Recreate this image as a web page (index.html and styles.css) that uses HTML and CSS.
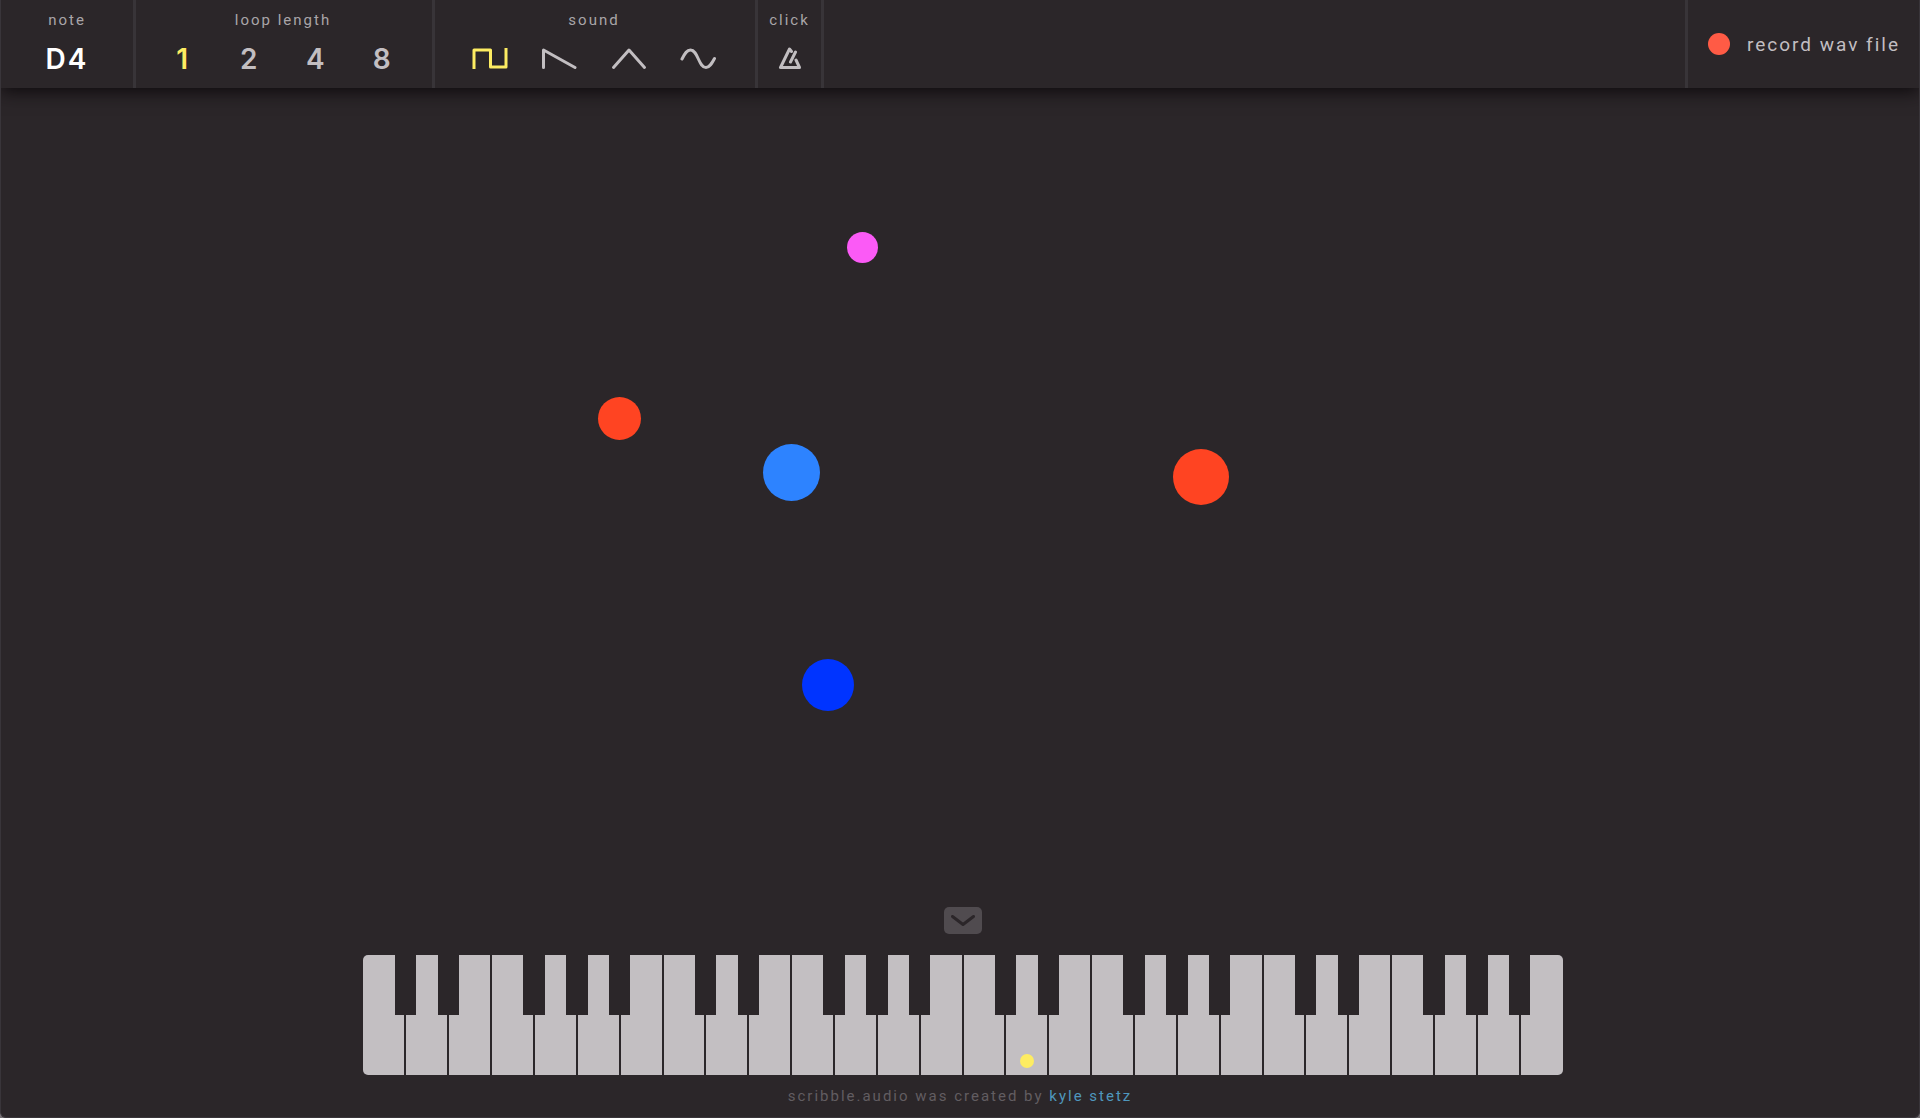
FILE: index.html
```html
<!DOCTYPE html>
<html lang="en">
<head>
  <meta charset="UTF-8">
  <meta name="viewport" content="width=device-width, initial-scale=1.0">
  <title>scribble.audio</title>
  <link rel="stylesheet" href="styles.css">
</head>
<body>
  <!-- Toolbar -->
  <header class="toolbar">
    <div class="panel panel-note">
      <span class="label">note</span>
      <output class="note-value" id="noteValue">D4</output>
    </div>

    <div class="panel panel-loop" role="group" aria-labelledby="loopLabel">
      <span class="label" id="loopLabel">loop length</span>
      <div class="options">
        <button class="option active">1</button>
        <button class="option">2</button>
        <button class="option">4</button>
        <button class="option">8</button>
      </div>
    </div>

    <div class="panel panel-sound" role="group" aria-labelledby="soundLabel">
      <span class="label" id="soundLabel">sound</span>
      <div class="options">
        <button class="option active" aria-label="square">
          <svg class="wave" viewBox="0 0 36 24"><path d="M2 22V3H18.500V20H34V1" stroke-linecap="butt"/></svg>
        </button>
        <button class="option" aria-label="sawtooth">
          <svg class="wave" viewBox="0 0 36 24"><path d="M2.500 20.500V3L34 20.500"/></svg>
        </button>
        <button class="option" aria-label="triangle">
          <svg class="wave" viewBox="0 0 36 24"><path d="M2.500 20.500L18 3L33.500 20.500"/></svg>
        </button>
        <button class="option" aria-label="sine">
          <svg class="wave" viewBox="0 0 36 24"><path d="M2 12C5 6 7 3 10.500 3C18 3 18.500 20.500 26 20.500C29.500 20.500 31.500 17 34.500 11.500"/></svg>
        </button>
      </div>
    </div>

    <div class="panel panel-click">
      <span class="label" id="clickLabel">click</span>
      <button class="option" aria-labelledby="clickLabel">
        <svg class="metronome" viewBox="0 0 24 24"><path d="M13.500 4.500L11.500 2L2.500 20.500H21.500L18 13M17.500 5L12.500 15"/></svg>
      </button>
    </div>

    <button class="record">
      <span class="record-dot"></span>
      record wav file
    </button>
  </header>

  <!-- Drawing area -->
  <main class="canvas">
    <span class="dot dot-pink"></span>
    <span class="dot dot-red"></span>
    <span class="dot dot-sky"></span>
    <span class="dot dot-orange"></span>
    <span class="dot dot-blue"></span>
  </main>

  <!-- Keyboard -->
  <section class="keyboard-area">
    <button class="toggle" aria-label="hide keyboard">
      <svg class="chevron" viewBox="0 0 24 12"><path d="M1.500 1.500L12 9.500L22.500 1.500"/></svg>
    </button>
    <div class="keyboard" id="keyboard"></div>
  </section>

  <footer class="credits">
    scribble.audio was created by <a href="#">kyle stetz</a>
  </footer>

  <script src="script.js"></script>
</body>
</html>
```
FILE: styles.css
```css
* {
  box-sizing: border-box;
}

html {
  background: #777276;
}

body {
  margin: 0;
  min-height: 100vh;
  display: flex;
  flex-direction: column;
  font-family: Roboto, "Liberation Sans", sans-serif;
  font-size: 15px;
  letter-spacing: 2px;
  color: #c2bec1;
  background: #2b2629;
  border: 1px solid #39353a;
  border-top: none;
  border-radius: 0 0 6px 6px;
}

html, body {
  overflow: hidden;
}

button {
  margin: 0;
  padding: 0;
  border: none;
  background: none;
  color: inherit;
  font: inherit;
  letter-spacing: inherit;
  cursor: pointer;
}

svg {
  display: block;
  fill: none;
  stroke: currentColor;
  stroke-width: 3;
  stroke-linecap: round;
  stroke-linejoin: round;
}

/* Toolbar */
.toolbar {
  display: flex;
  height: 88px;
  background: #2b2629;
  box-shadow: 0 4px 16px #0f0b0e;
  z-index: 1;
}

.panel {
  display: flex;
  flex-direction: column;
  align-items: center;
  gap: 9px;
  padding-top: 10px;
  border-right: 3px solid #383438;
}

.panel-note {
  width: 135px;
}

.panel-loop {
  width: 299px;
  padding-left: 14px;
  padding-right: 16px;
}

.panel-sound {
  width: 323px;
  padding-left: 20px;
  padding-right: 22px;
}

.panel-click {
  width: 66px;
}

.label {
  line-height: 20px;
  color: #a9a5a8;
}

.options {
  display: flex;
  align-self: stretch;
}

.note-value,
.option {
  font-family: Inter, sans-serif;
  font-size: 28px;
  font-weight: 600;
  line-height: 40px;
}

.note-value {
  color: #fff;
}

.option {
  display: flex;
  flex: 1;
  align-items: center;
  justify-content: center;
  height: 40px;
}

.panel-click .option {
  flex: none;
}

.option.active {
  color: #fdec62;
}

.wave {
  width: 36px;
  height: 24px;
}

.metronome {
  width: 24px;
  height: 24px;
}

.record {
  display: flex;
  align-items: center;
  gap: 17px;
  margin-left: auto;
  padding: 0 19px 0 20px;
  border-left: 3px solid #383438;
  font-size: 19px;
}

.record-dot {
  width: 22px;
  height: 22px;
  border-radius: 50%;
  background: #ff5b45;
}

/* Drawing area */
.canvas {
  position: relative;
  flex: 1;
}

.dot {
  position: absolute;
  border-radius: 50%;
}

.dot-pink {
  left: 846px;
  top: 144px;
  width: 31px;
  height: 31px;
  background: #fb5af6;
}

.dot-red {
  left: 597px;
  top: 309px;
  width: 43px;
  height: 43px;
  background: #ff4422;
}

.dot-sky {
  left: 762px;
  top: 356px;
  width: 57px;
  height: 57px;
  background: #2d83ff;
}

.dot-orange {
  left: 1172px;
  top: 361px;
  width: 56px;
  height: 56px;
  background: #ff4422;
}

.dot-blue {
  left: 801px;
  top: 571px;
  width: 52px;
  height: 52px;
  background: #0034ff;
}

/* Keyboard */
.keyboard-area {
  display: flex;
  flex-direction: column;
  align-items: center;
  gap: 21px;
  padding-left: 5px;
}

.toggle {
  display: flex;
  justify-content: center;
  align-items: center;
  width: 38px;
  height: 27px;
  border-radius: 5px;
  color: #2b2629;
  background: #504b4f;
}

.chevron {
  width: 24px;
  height: 12px;
}

.keyboard {
  display: flex;
  width: 100%;
  max-width: 1200px;
  height: 120px;
  border-radius: 5px;
  overflow: hidden;
}

.key {
  position: relative;
  flex: 1;
}

.white {
  display: flex;
  justify-content: center;
  align-items: flex-end;
  width: 100%;
  height: 100%;
  padding-bottom: 7px;
  background: #c3bfc2;
  border: solid #2b2629;
  border-width: 0 1px;
}

.key:first-child .white {
  border-left: none;
}

.key:last-child .white {
  border-right: none;
}

.black {
  position: absolute;
  top: 0;
  left: 75%;
  z-index: 1;
  width: 50%;
  height: 50%;
  background: #2b2629;
}

.marker {
  width: 14px;
  height: 14px;
  border-radius: 50%;
  background: #fdec62;
}

/* Credits */
.credits {
  padding: 11px 0;
  line-height: 20px;
  text-align: center;
  color: #625d61;
}

.credits a {
  color: #4f97bd;
  text-decoration: none;
}
```
FILE: script.js
```js
const keyboard = document.getElementById('keyboard');
const notes = ['C', 'D', 'E', 'F', 'G', 'A', 'B'];
const current = document.getElementById('noteValue').textContent;

const addButton = (parent, className, name) => {
  const button = document.createElement('button');
  button.className = className;
  button.setAttribute('aria-label', name);
  parent.appendChild(button);
  return button;
};

for (let octave = 2; octave < 6; octave++) {
  notes.forEach((note) => {
    const key = document.createElement('div');
    key.className = 'key';
    const white = addButton(key, 'white', note + octave);

    // no black key after E and B
    if (note !== 'E' && note !== 'B') {
      addButton(key, 'black', note + '#' + octave);
    }

    if (note + octave === current) {
      const marker = document.createElement('span');
      marker.className = 'marker';
      white.appendChild(marker);
    }

    keyboard.appendChild(key);
  });
}
```
